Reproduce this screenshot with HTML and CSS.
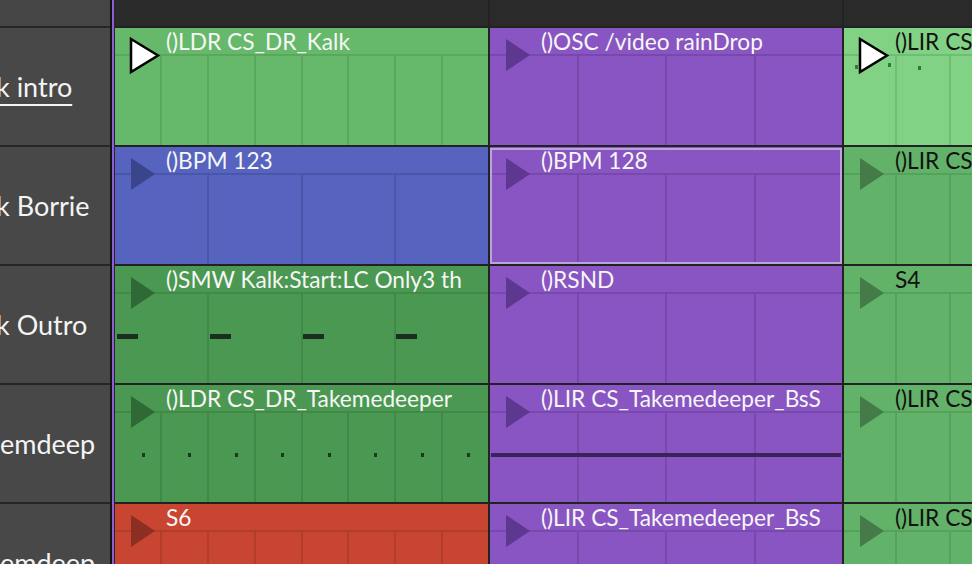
FILE: index.html
```html
<!DOCTYPE html>
<html>
<head>
<meta charset="utf-8">
<link rel="stylesheet" href="styles.css">
</head>
<body>
<div class="app">
  <div class="tracks">
    <div class="tracks-head"></div>
    <div class="track"><span class="name current cut">k intro</span></div>
    <div class="track"><span class="name cut">k Borrie</span></div>
    <div class="track"><span class="name cut">k Outro</span></div>
    <div class="track"><span class="name">emdeep</span></div>
    <div class="track"><span class="name">emdeep</span></div>
  </div>
  <div class="divider"></div>
  <div class="grid">
    <div class="ghead"></div>
    <div class="ghead"></div>
    <div class="ghead"></div>

    <!-- row 1 -->
    <div class="cell green">
      <div class="cell-head">()LDR CS_DR_Kalk</div>
      <div class="cell-body"><span></span><span></span><span></span><span></span><span></span><span></span><span></span><span></span></div>
      <svg class="play" width="32" height="39" viewBox="0 0 32 39"><polygon points="2,2 29,18.5 2,35" fill="#fff" stroke="#000" stroke-width="2.5" stroke-linejoin="miter"/></svg>
    </div>
    <div class="cell purple">
      <div class="cell-head">()OSC /video rainDrop</div>
      <div class="cell-body"><span></span><span></span><span></span><span></span></div>
      <span class="tri"></span>
    </div>
    <div class="cell lightgreen">
      <div class="cell-head">()LIR CS</div>
      <div class="cell-body"><span></span><span></span><span></span><span></span><span></span><span></span><span></span><span></span></div>
      <span class="note n1"></span><span class="note n2"></span><span class="note n3"></span>
      <svg class="play" width="32" height="39" viewBox="0 0 32 39"><polygon points="2,2 29,18.5 2,35" fill="#fff" stroke="#000" stroke-width="2.5" stroke-linejoin="miter"/></svg>
    </div>

    <!-- row 2 -->
    <div class="cell blue">
      <div class="cell-head">()BPM 123</div>
      <div class="cell-body"><span></span><span></span><span></span><span></span></div>
      <span class="tri"></span>
    </div>
    <div class="cell purple selected">
      <div class="cell-head">()BPM 128</div>
      <div class="cell-body"><span></span><span></span><span></span><span></span></div>
      <span class="tri"></span>
    </div>
    <div class="cell green2">
      <div class="cell-head">()LIR CS</div>
      <div class="cell-body"><span></span><span></span><span></span><span></span><span></span><span></span><span></span><span></span></div>
      <span class="tri"></span>
    </div>

    <!-- row 3 -->
    <div class="cell dgreen">
      <div class="cell-head">()SMW Kalk:Start:LC Only3 th</div>
      <div class="cell-body"><span></span><span></span><span></span><span></span></div>
      <span class="tri"></span>
      <span class="dash d1"></span><span class="dash d2"></span><span class="dash d3"></span><span class="dash d4"></span>
    </div>
    <div class="cell purple">
      <div class="cell-head">()RSND</div>
      <div class="cell-body"><span></span><span></span><span></span><span></span></div>
      <span class="tri"></span>
    </div>
    <div class="cell green2">
      <div class="cell-head">S4</div>
      <div class="cell-body"><span></span><span></span><span></span><span></span><span></span><span></span><span></span><span></span></div>
      <span class="tri"></span>
    </div>

    <!-- row 4 -->
    <div class="cell dgreen">
      <div class="cell-head">()LDR CS_DR_Takemedeeper</div>
      <div class="cell-body"><span></span><span></span><span></span><span></span><span></span><span></span><span></span><span></span></div>
      <span class="tri"></span>
      <span class="dot" style="left:27px"></span>
      <span class="dot" style="left:73px"></span>
      <span class="dot" style="left:120px"></span>
      <span class="dot" style="left:166px"></span>
      <span class="dot" style="left:213px"></span>
      <span class="dot" style="left:259px"></span>
      <span class="dot" style="left:306px"></span>
      <span class="dot" style="left:352px"></span>
    </div>
    <div class="cell purple">
      <div class="cell-head">()LIR CS_Takemedeeper_BsS</div>
      <div class="cell-body"><span></span><span></span><span></span><span></span></div>
      <span class="tri"></span>
      <span class="longnote"></span>
    </div>
    <div class="cell green2">
      <div class="cell-head">()LIR CS</div>
      <div class="cell-body"><span></span><span></span><span></span><span></span><span></span><span></span><span></span><span></span></div>
      <span class="tri"></span>
    </div>

    <!-- row 5 -->
    <div class="cell red">
      <div class="cell-head">S6</div>
      <div class="cell-body"><span></span><span></span><span></span><span></span><span></span><span></span><span></span><span></span></div>
      <span class="tri"></span>
    </div>
    <div class="cell purple">
      <div class="cell-head">()LIR CS_Takemedeeper_BsS</div>
      <div class="cell-body"><span></span><span></span><span></span><span></span></div>
      <span class="tri"></span>
    </div>
    <div class="cell green2">
      <div class="cell-head">()LIR CS</div>
      <div class="cell-body"><span></span><span></span><span></span><span></span><span></span><span></span><span></span><span></span></div>
      <span class="tri"></span>
    </div>
  </div>
</div>
</body>
</html>
```
FILE: styles.css
```css
html, body {
  margin: 0;
  padding: 0;
  background: #222;
  overflow: hidden;
}

.app {
  display: flex;
  width: 972px;
  height: 564px;
  overflow: hidden;
  background: #222;
  font-family: Lato, "Noto Sans", sans-serif;
}

/* ---- track list ---- */
.tracks {
  flex: none;
  width: 110px;
  display: grid;
  grid-template-rows: 26px repeat(5, 117px);
  row-gap: 2px;
  background: #262626;
  overflow: hidden;
}

.tracks-head {
  background: #454545;
}

.track {
  background: #484848;
  display: flex;
  align-items: center;
  overflow: hidden;
  white-space: nowrap;
}

.name {
  font-size: 27px;
  color: #f4f4f4;
  line-height: 30px;
}

.name.cut {
  margin-left: -4px;
}

.name.current {
  text-decoration: underline;
  text-decoration-thickness: 2px;
  text-underline-offset: 7px;
}

.divider {
  flex: none;
  width: 2px;
  background: #8c5fd2;
  border-left: 2px solid #121212;
  border-right: 1px solid #262626;
}

/* ---- clip grid ---- */
.grid {
  flex: none;
  display: grid;
  grid-template-columns: 373px 352px 424px;
  grid-template-rows: 26px repeat(5, 117px);
  gap: 2px;
  background: #222;
}

.ghead {
  background: #2a2a2a;
}

.cell {
  position: relative;
  display: flex;
  flex-direction: column;
  overflow: hidden;
  background: var(--bg);
  color: #f6f6f6;
}

.cell-head {
  flex: none;
  box-sizing: border-box;
  height: 28px;
  padding-top: 1px;
  line-height: 26px;
  border-bottom: 2px solid var(--line);
  padding-left: 51px;
  font-size: 22.7px;
  white-space: nowrap;
  overflow: visible;
}

.cell-body {
  flex: 1;
  display: flex;
}

.cell-body span {
  flex: 1;
  border-left: 2px solid var(--line);
}

.cell-body span:first-child {
  border-left: none;
}

.tri {
  position: absolute;
  left: 16px;
  top: 11px;
  width: 0;
  height: 0;
  border-left: 24px solid var(--tri);
  border-top: 16px solid transparent;
  border-bottom: 16px solid transparent;
}

.play {
  position: absolute;
  left: 14px;
  top: 9px;
}

.selected::after {
  content: "";
  position: absolute;
  inset: 1px 0 0 0;
  border: 2px solid #bba4da;
}

/* colours */
.green {
  --bg: #66b86b;
  --line: #59a85e;
  --tri: #3a7d40;
}

.lightgreen {
  --bg: #82d285;
  --line: #70be74;
  --tri: #447a48;
  color: #111;
}

.green2 {
  --bg: #63b269;
  --line: #56a25c;
  --tri: #457a49;
  color: #111;
}

.dgreen {
  --bg: #4a9851;
  --line: #408947;
  --tri: #2f6a36;
}

.blue {
  --bg: #5764bf;
  --line: #4a56a8;
  --tri: #3b458c;
}

.purple {
  --bg: #8855c2;
  --line: #7749ad;
  --tri: #5e3790;
}

.red {
  --bg: #c84631;
  --line: #b13d2a;
  --tri: #8b2f22;
}

/* note previews */
.note {
  position: absolute;
  width: 3px;
  height: 4px;
  background: #3a7440;
}

.n1 { left: 11px; top: 37px; }
.n2 { left: 44px; top: 35px; }
.n3 { left: 74px; top: 38px; }

.dash {
  position: absolute;
  top: 68px;
  width: 21px;
  height: 5px;
  background: #1b2e1f;
}

.d1 { left: 2px; }
.d2 { left: 95px; }
.d3 { left: 188px; }
.d4 { left: 281px; }

.dot {
  position: absolute;
  top: 68px;
  width: 3px;
  height: 4px;
  background: #1b3a21;
}

.longnote {
  position: absolute;
  left: 1px;
  top: 68px;
  width: 350px;
  height: 4px;
  background: #3a2457;
}
```
